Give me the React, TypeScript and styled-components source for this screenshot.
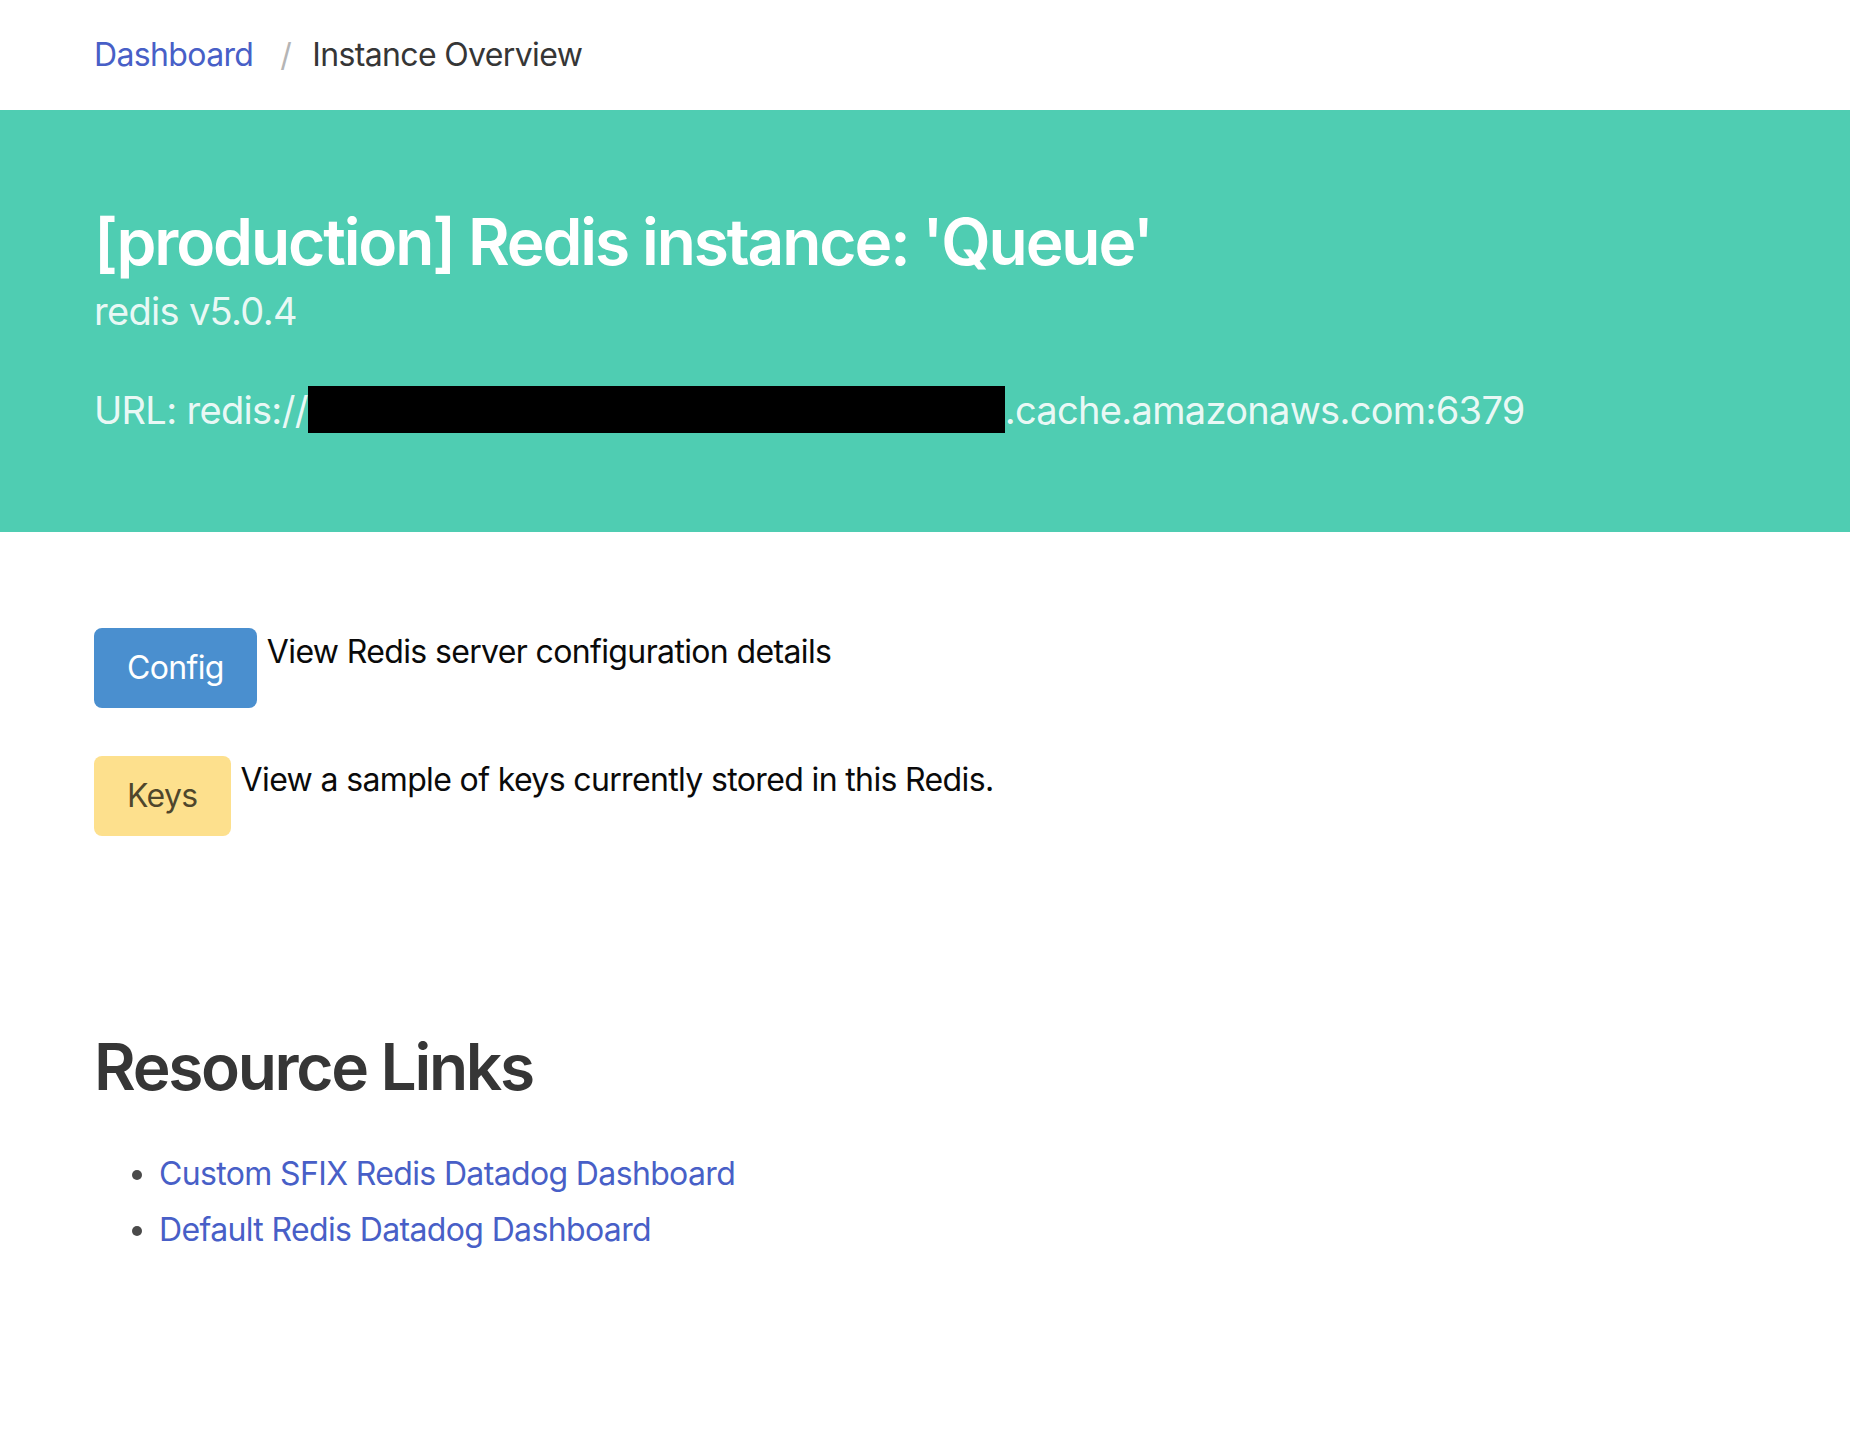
import styled, { createGlobalStyle } from 'styled-components'

const GlobalStyle = createGlobalStyle`
  html, body {
    margin: 0;
    padding: 0;
    background: #ffffff;
  }

  body {
    font-family: Inter, "Noto Sans", "Liberation Sans", sans-serif;
    font-size: 32px;
    line-height: 1.5;
    letter-spacing: -0.02em;
    color: #4a4a4a;
  }
`

const Breadcrumb = styled.nav`
  display: flex;
  align-items: center;
  padding: 31px 94px;
  line-height: 48px;
`

const CrumbLink = styled.a`
  color: #485fc7;
  text-decoration: none;
`

const CrumbSep = styled.span`
  color: #b5b5b5;
  margin: 0 21px 0 27px;
`

const CrumbActive = styled.span`
  color: #363636;
`

const Hero = styled.section`
  background-color: #4fcdb2;
  padding: 96px 94px 97px;
  color: #ffffff;
`

const Title = styled.h1`
  margin: 0;
  font-size: 64px;
  font-weight: 600;
  line-height: 72px;
  letter-spacing: -0.033em;
  color: #ffffff;
`

const Subtitle = styled.h2`
  margin: 8px 0 0;
  font-size: 38px;
  font-weight: 400;
  line-height: 50px;
  letter-spacing: -0.018em;
  color: rgba(255, 255, 255, 0.9);
`

const UrlLine = styled.p`
  margin: 49px 0 0;
  font-size: 38px;
  line-height: 50px;
  letter-spacing: -0.018em;
  color: rgba(255, 255, 255, 0.9);
`

const Redacted = styled.span`
  display: inline-block;
  width: 697px;
  height: 47px;
  background: #000000;
  vertical-align: -9px;
`

const Section = styled.section`
  padding: 96px 94px;
`

const ActionRow = styled.div`
  display: flex;
  align-items: flex-start;
  gap: 10px;

  & + & {
    margin-top: 48px;
  }
`

const Button = styled.a<{ $tone: 'info' | 'warning' }>`
  display: inline-flex;
  align-items: center;
  justify-content: center;
  height: 80px;
  padding: 0 33px;
  border-radius: 8px;
  font-size: 32px;
  text-decoration: none;
  background-color: ${p => (p.$tone === 'info' ? '#4a8fcf' : '#fde08d')};
  color: ${p => (p.$tone === 'info' ? '#ffffff' : 'rgba(0, 0, 0, 0.7)')};
`

const Description = styled.span`
  color: #0a0a0a;
  line-height: 48px;
`

const Heading = styled.h2`
  margin: 3px 0 47px;
  font-size: 64px;
  font-weight: 600;
  line-height: 72px;
  letter-spacing: -0.036em;
  color: #363636;
`

const LinkList = styled.ul`
  margin: 0;
  padding-left: 65px;
  color: #4a4a4a;

  li + li {
    margin-top: 8px;
  }
`

const ResourceLink = styled.a`
  color: #485fc7;
  text-decoration: none;
`

export default function App() {
  return (
    <>
      <GlobalStyle />
      <Breadcrumb>
        <CrumbLink href="#">Dashboard</CrumbLink>
        <CrumbSep>/</CrumbSep>
        <CrumbActive>Instance Overview</CrumbActive>
      </Breadcrumb>

      <Hero>
        <Title>[production] Redis instance: 'Queue'</Title>
        <Subtitle>redis v5.0.4</Subtitle>
        <UrlLine>
          URL: redis://<Redacted />.cache.amazonaws.com:6379
        </UrlLine>
      </Hero>

      <Section>
        <ActionRow>
          <Button $tone="info" href="#">Config</Button>
          <Description>View Redis server configuration details</Description>
        </ActionRow>
        <ActionRow>
          <Button $tone="warning" href="#">Keys</Button>
          <Description>View a sample of keys currently stored in this Redis.</Description>
        </ActionRow>
      </Section>

      <Section>
        <Heading>Resource Links</Heading>
        <LinkList>
          <li>
            <ResourceLink href="#">Custom SFIX Redis Datadog Dashboard</ResourceLink>
          </li>
          <li>
            <ResourceLink href="#">Default Redis Datadog Dashboard</ResourceLink>
          </li>
        </LinkList>
      </Section>
    </>
  )
}
